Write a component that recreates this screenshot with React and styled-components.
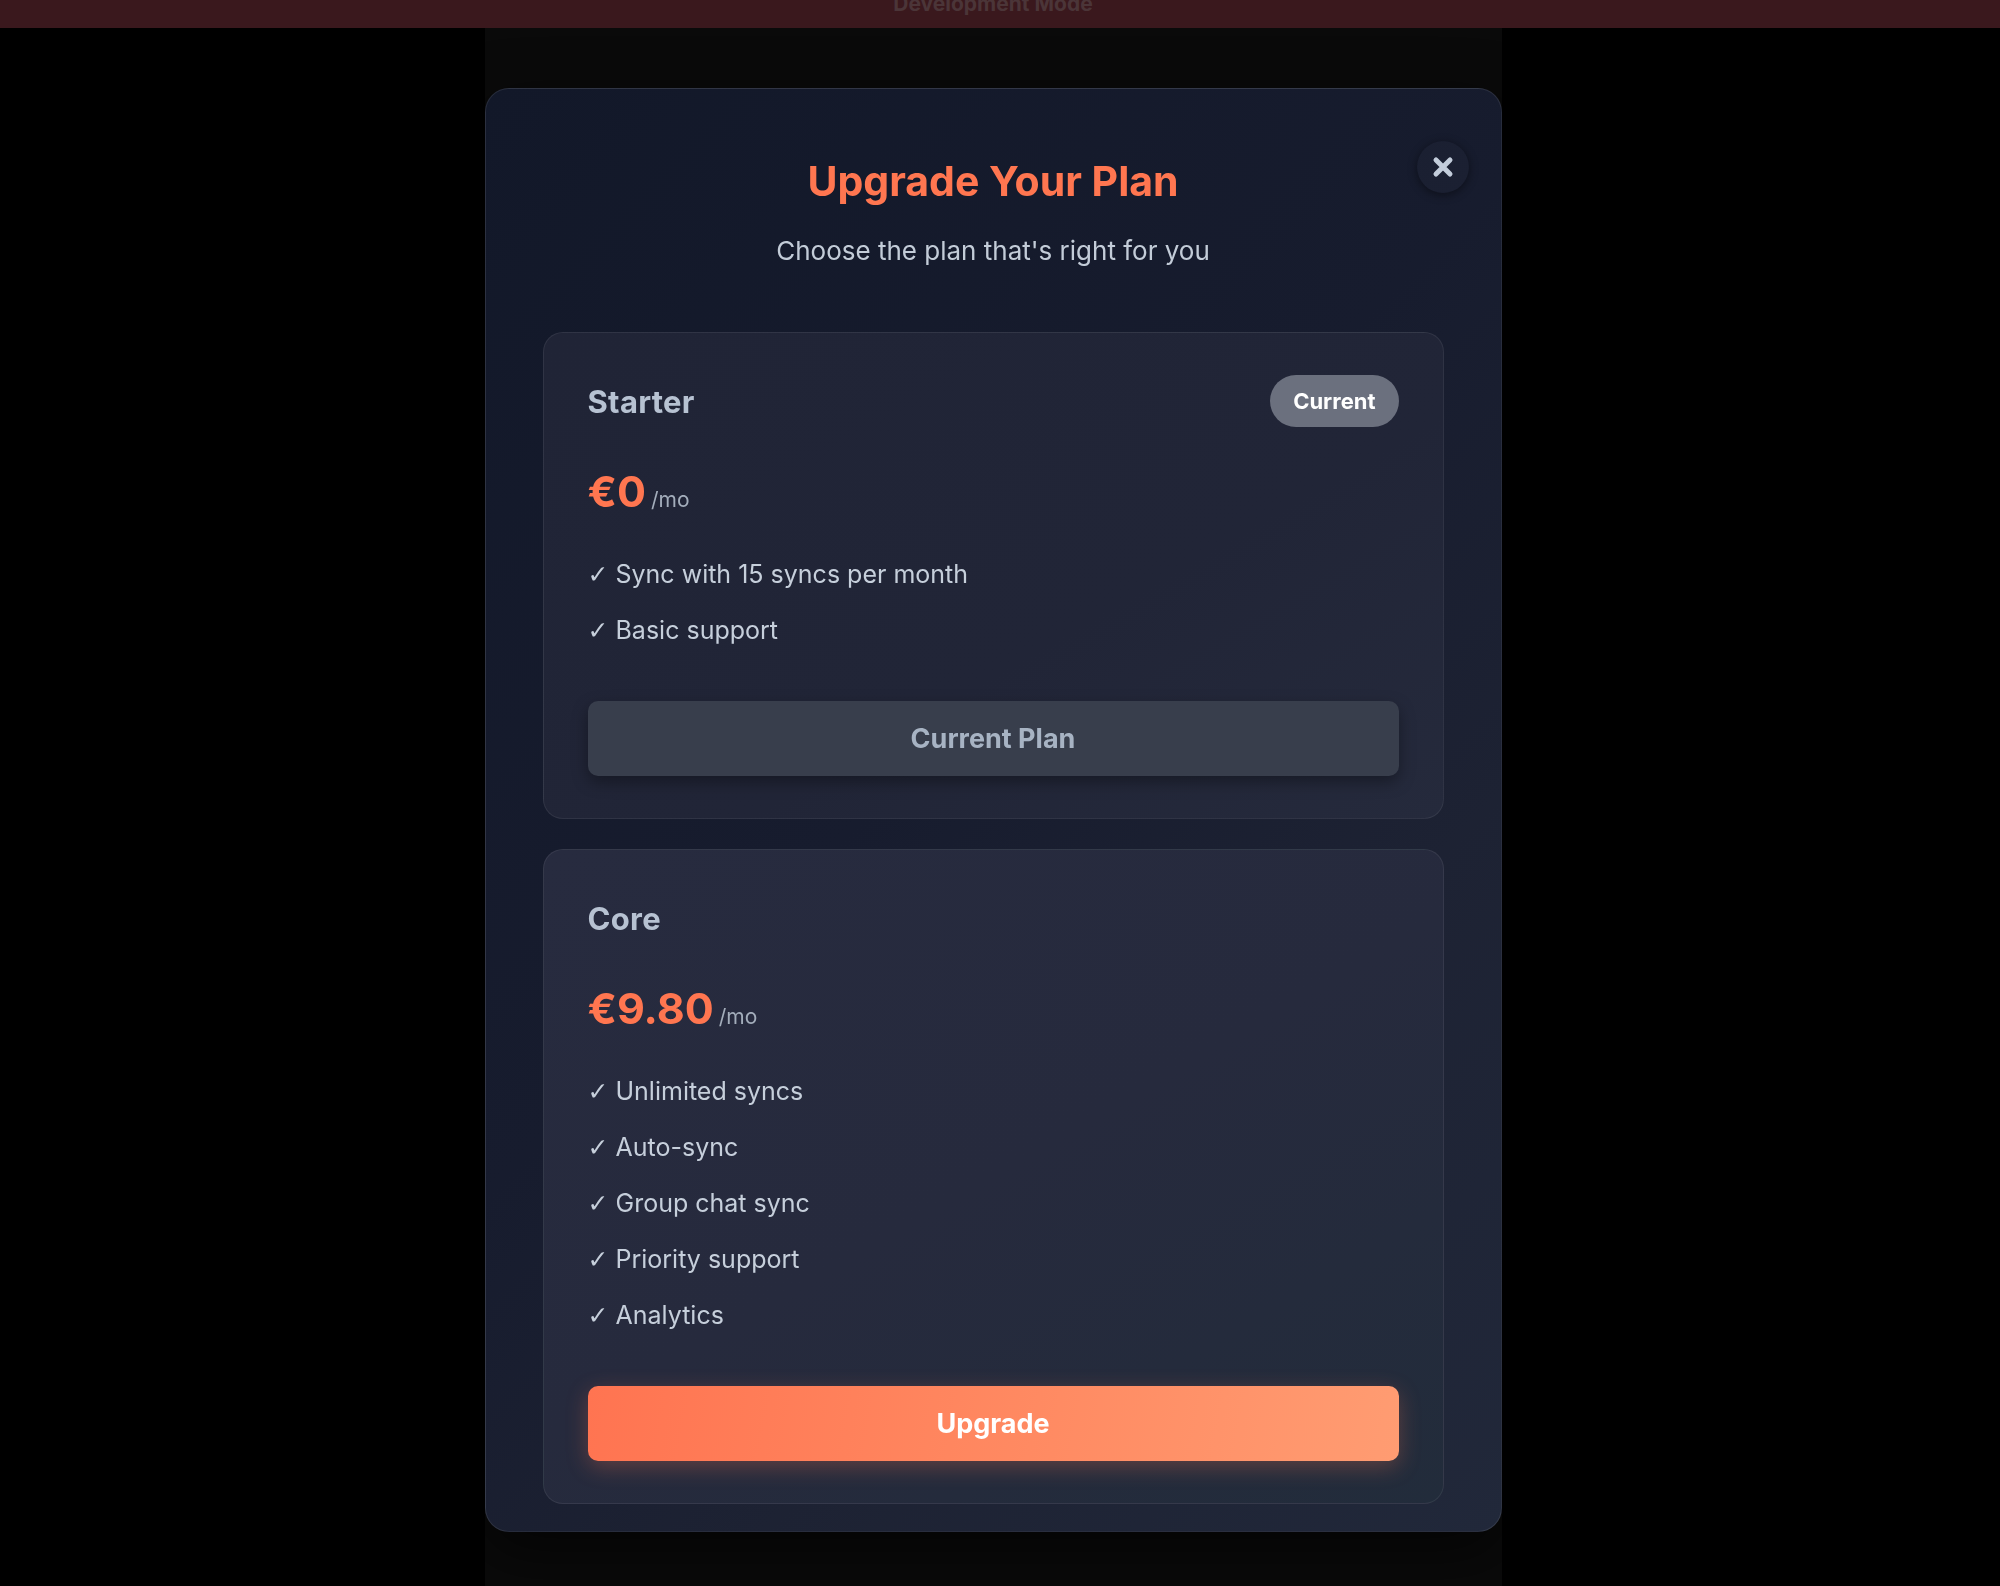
import React from "react";
import styled, { createGlobalStyle } from "styled-components";

const plans = [
   {
      name: "Starter",
      price: "€0",
      current: true,
      features: ["Sync with 15 syncs per month", "Basic support"],
   },
   {
      name: "Core",
      price: "€9.80",
      current: false,
      features: [
         "Unlimited syncs",
         "Auto-sync",
         "Group chat sync",
         "Priority support",
         "Analytics",
      ],
   },
];

const App = () => {
   return (
      <>
         <GlobalStyle />
         <Page>
            <DevBar>
               <DevText>Development Mode</DevText>
            </DevBar>
            <Column>
               <HiddenLine>Customer sync · DEVELOPMENT build · staging</HiddenLine>
            </Column>
         </Page>

         <Overlay>
            <Modal>
               <CloseButton aria-label="Close">
                  <svg width="24" height="24" viewBox="0 0 24 24">
                     <path
                        d="M5 5 L19 19 M19 5 L5 19"
                        stroke="currentColor"
                        strokeWidth="5"
                        strokeLinecap="round"
                     />
                  </svg>
               </CloseButton>
               <Header>
                  <Title>Upgrade Your Plan</Title>
                  <Subtitle>Choose the plan that's right for you</Subtitle>
               </Header>
               <Cards>
                  {plans.map((plan) => {
                     return (
                        <Card key={plan.name} $highlight={!plan.current}>
                           <CardHead>
                              <PlanName>{plan.name}</PlanName>
                              {plan.current && <Badge>Current</Badge>}
                           </CardHead>
                           <PriceRow>
                              <Price>{plan.price}</Price>
                              <Per>/mo</Per>
                           </PriceRow>
                           <Features>
                              {plan.features.map((f) => (
                                 <Feature key={f}>
                                    <Check>✓</Check>
                                    {f}
                                 </Feature>
                              ))}
                           </Features>
                           <PlanButton $primary={!plan.current}>
                              {plan.current ? "Current Plan" : "Upgrade"}
                           </PlanButton>
                        </Card>
                     );
                  })}
               </Cards>
            </Modal>
         </Overlay>
      </>
   );
};

const GlobalStyle = createGlobalStyle`
   * {
      box-sizing: border-box;
   }
   body {
      margin: 0;
      background: #000;
      font-family: Inter, "Noto Sans", "Liberation Sans", sans-serif;
      overflow: hidden;
   }
`;

const Page = styled.div`
   min-height: 100vh;
   display: flex;
   flex-direction: column;
   padding-right: 14px;
   background: #000;
`;

const DevBar = styled.div`
   height: 28px;
   background: #3a181d;
   display: flex;
   justify-content: center;
   overflow: hidden;
   margin-right: -14px;
   padding-right: 14px;
`;

const DevText = styled.div`
   margin-top: -4px;
   font-size: 21px;
   line-height: 16px;
   font-weight: 700;
   color: #4b3538;
`;

const Column = styled.div`
   flex: 1;
   width: 1017px;
   margin: 0 auto;
   background: #0a0a0a;
   display: flex;
   justify-content: center;
   padding-top: 76px;
`;

const HiddenLine = styled.div`
   font-size: 20px;
   font-weight: 700;
   color: #1c1c1e;
   letter-spacing: 1px;
`;

const Overlay = styled.div`
   position: fixed;
   inset: 0;
   display: flex;
   justify-content: center;
   align-items: flex-start;
   padding: 88px 14px 0 0;
`;

const Modal = styled.div`
   position: relative;
   width: 1017px;
   height: 1444px;
   overflow: hidden;
   padding: 0 57px;
   border-radius: 24px;
   border: 1px solid rgba(255, 255, 255, 0.09);
   background: linear-gradient(
      135deg,
      #121829 0%,
      #171c2e 45%,
      #1d2233 70%,
      #21283a 100%
   );
   box-shadow: 0 20px 60px rgba(0, 0, 0, 0.6);
`;

const CloseButton = styled.button`
   position: absolute;
   top: 52px;
   right: 32px;
   width: 52px;
   height: 52px;
   padding: 0;
   border-radius: 50%;
   border: none;
   background: rgba(255, 255, 255, 0.02);
   box-shadow: 0 2px 10px rgba(0, 0, 0, 0.45);
   color: #c3cddb;
   display: flex;
   align-items: center;
   justify-content: center;
   cursor: pointer;
`;

const Header = styled.div`
   padding-top: 68px;
   display: flex;
   flex-direction: column;
   align-items: center;
`;

const Title = styled.h2`
   margin: 0;
   font-size: 41px;
   line-height: 48px;
   font-weight: 700;
   color: #ff7650;
`;

const Subtitle = styled.p`
   margin: 31px 0 0;
   font-size: 26px;
   line-height: 30px;
   color: #c3ccd8;
`;

const Cards = styled.div`
   margin-top: 66px;
   display: flex;
   flex-direction: column;
   gap: 30px;
`;

const Card = styled.div`
   padding: 42px 44px 42px;
   border-radius: 20px;
   border: 1px solid rgba(255, 255, 255, 0.07);
   background: ${(p) =>
      p.$highlight
         ? "linear-gradient(150deg, #272b3f 0%, #262a3d 50%, #222c3b 100%)"
         : "linear-gradient(150deg, #202436 0%, #212537 60%, #252a3c 100%)"};
`;

const CardHead = styled.div`
   min-height: 52px;
   display: flex;
   align-items: center;
   justify-content: space-between;
`;

const PlanName = styled.h3`
   margin: 0;
   font-size: 31px;
   font-weight: 700;
   letter-spacing: 0.3px;
   color: #b7c2d2;
`;

const Badge = styled.span`
   height: 52px;
   padding: 0 23px;
   border-radius: 26px;
   background: #6b707e;
   color: #fff;
   font-size: 22px;
   font-weight: 700;
   display: flex;
   align-items: center;
`;

const PriceRow = styled.div`
   margin-top: 42px;
   display: flex;
   align-items: baseline;
   gap: 5px;
`;

const Price = styled.span`
   font-size: 43px;
   line-height: 44px;
   font-weight: 700;
   color: #ff7650;
`;

const Per = styled.span`
   font-size: 21px;
   color: #a3adbb;
`;

const Features = styled.ul`
   list-style: none;
   margin: 44px 0 0;
   padding: 0;
   display: flex;
   flex-direction: column;
   gap: 22px;
`;

const Feature = styled.li`
   height: 34px;
   font-size: 25px;
   line-height: 34px;
   color: #c6cfdb;
   white-space: nowrap;
`;

const Check = styled.span`
   display: inline-block;
   width: 28px;
   font-family: "DejaVu Sans", sans-serif;
   font-size: 25px;
   line-height: 1;
   color: #c6cfdb;
`;

const PlanButton = styled.button`
   margin-top: 54px;
   width: 100%;
   height: 75px;
   border: none;
   border-radius: 10px;
   font-family: inherit;
   font-size: 27px;
   font-weight: 700;
   cursor: pointer;
   color: ${(p) => (p.$primary ? "#ffffff" : "#a7b3c3")};
   background: ${(p) =>
      p.$primary
         ? "linear-gradient(100deg, #ff7451 0%, #ff8a62 55%, #ff9c72 100%)"
         : "#383e4c"};
   box-shadow: ${(p) =>
      p.$primary
         ? "0 6px 22px rgba(255, 118, 80, 0.28)"
         : "0 6px 16px rgba(0, 0, 0, 0.35)"};
`;

export default App;
